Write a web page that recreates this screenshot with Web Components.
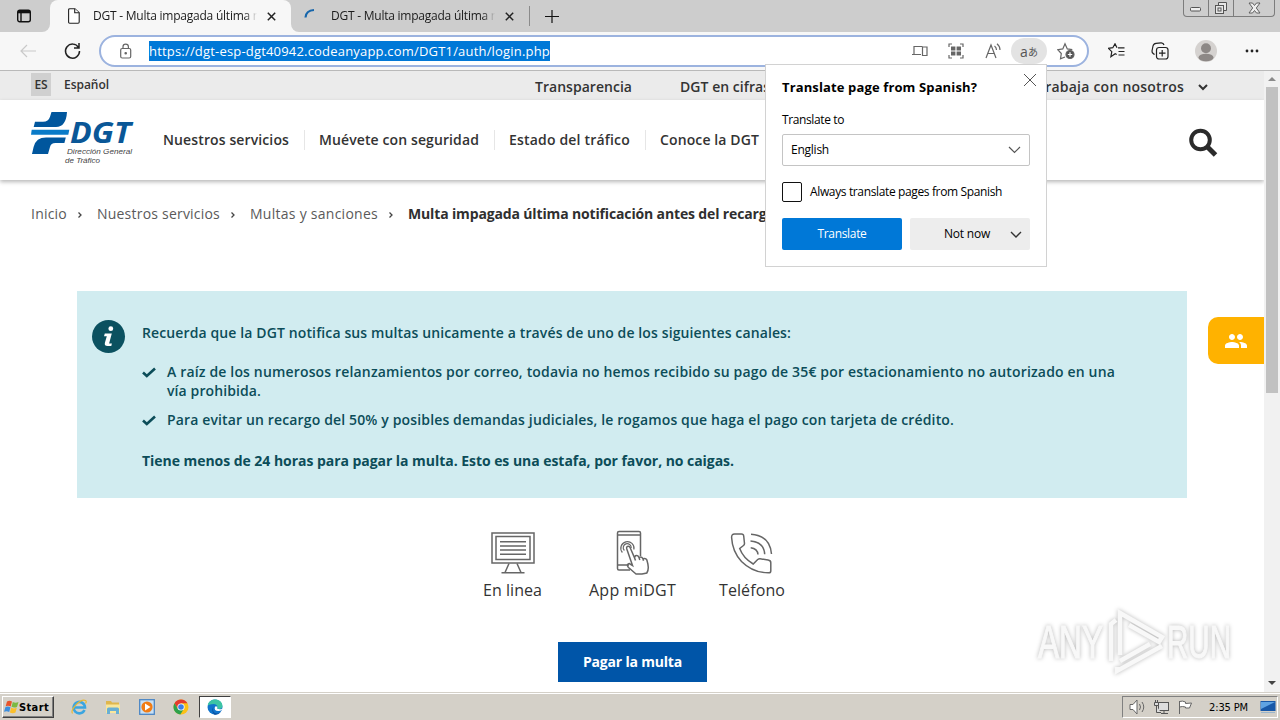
<!DOCTYPE html>
<html lang="es">
<head>
<meta charset="utf-8">
<title>DGT - Multa impagada última notificación</title>
<style>
    html, body { margin: 0; height: 100%; overflow: hidden; }
    body { font-family: "Open Sans", "Noto Sans", sans-serif; color: #333; background: #fff; }
</style>
</head>
<body>
<desktop-screen></desktop-screen>

<script>
// Text that is spaced out (or in) to fill the width given in px
class FitLabel extends HTMLElement {
    connectedCallback() {
        if (!this.shadowRoot) {
            this.attachShadow({ mode: 'open' });
            this.shadowRoot.innerHTML = `
                <style>
                    :host { display: inline-block; white-space: nowrap; flex: none; justify-self: start; }
                </style>
                <slot></slot>
            `;
        }
        const wanted = parseFloat(this.getAttribute('w'));
        if (!wanted) return;
        this.style.letterSpacing = '0px';
        const natural = this.getBoundingClientRect().width;
        this.style.letterSpacing = `${(wanted - natural) / this.textContent.length}px`;
        this.style.width = `${wanted}px`;
    }
}
customElements.define('fit-label', FitLabel);

class BrowserTab extends HTMLElement {
    connectedCallback() {
        this.attachShadow({ mode: 'open' });
        this.shadowRoot.innerHTML = `
            <style>
                :host {
                    display: flex;
                    align-items: center;
                    box-sizing: border-box;
                    height: 32px;
                    flex: none;
                    color: #1b1b1b;
                    font-size: 12px;
                }
                :host([active]) { background: #f7f7f7; border-radius: 8px 8px 0 0; }
                .title {
                    overflow: hidden;
                    width: 164px;
                    line-height: 20px;
                    -webkit-mask: linear-gradient(90deg, #000 152px, transparent 164px);
                    mask: linear-gradient(90deg, #000 152px, transparent 164px);
                }
                .close { margin-left: 10px; }
            </style>
            <slot name="icon"></slot>
            <div class="title"><slot></slot></div>
            <svg class="close" width="9" height="9" viewBox="0 0 9 9" stroke="#222" stroke-width="1.5"><path d="M.8.8l7.4 7.4M8.2.8L.8 8.2"/></svg>
        `;
    }
}
customElements.define('browser-tab', BrowserTab);

class TabStrip extends HTMLElement {
    connectedCallback() {
        this.attachShadow({ mode: 'open' });
        this.shadowRoot.innerHTML = `
            <style>
                :host {
                    display: flex;
                    height: 32px;
                    background: #cdcdcd;
                }
                .menu-wrap { background: #f7f7f7; }
                .menu {
                    display: flex;
                    align-items: center;
                    box-sizing: border-box;
                    width: 50px;
                    height: 32px;
                    padding-left: 17px;
                    background: #cdcdcd;
                    border-radius: 0 0 8px 0;
                }
                .active-wrap { background: #cdcdcd; }
                .active-wrap browser-tab { width: 241px; padding-left: 18px; }
                .active-wrap svg { margin-right: 13px; }
                .second { background: #f7f7f7; }
                .second browser-tab { width: 238px; padding-left: 12px; background: #cdcdcd; border-radius: 0 0 0 8px; }
                .second svg { margin-right: 14px; }
                .after { display: flex; align-items: center; flex: 1; }
                .bar { width: 1px; height: 20px; background: #8b8b8b; }
                .plus { margin-left: 15px; }
                .win {
                    align-self: flex-start;
                    margin: 0 5px 0 auto;
                    display: flex;
                    height: 16px;
                    border: 1px solid #7c7c7c;
                    border-top: 0;
                    border-radius: 0 0 4px 4px;
                }
                .win span { display: flex; align-items: center; justify-content: center; }
                .win span + span { border-left: 1px solid #7c7c7c; }
            </style>
            <div class="menu-wrap"><div class="menu">
                <svg width="14" height="14" viewBox="0 0 14 14" fill="none" stroke="#111" stroke-width="1.4"><rect x=".7" y="1.2" width="12.6" height="11.6" rx="2"/><path d="M1 3h12" stroke-width="2.6"/><path d="M4 3v9.4"/></svg>
            </div></div>
            <div class="active-wrap"><browser-tab active>
                <svg slot="icon" width="12" height="16" viewBox="0 0 12 16" fill="#fff" stroke="#222" stroke-width="1.1"><path d="M1.9.7h5l4.300 4v9.400q0 1.100-1.100 1.100H1.7q-1.100 0-1.100-1.100V1.800q0-1.100 1.300-1.100z"/><path d="M6.700.8v4h4.400"/></svg>
                <fit-label w="167">DGT - Multa impagada última n</fit-label>
            </browser-tab></div>
            <div class="second"><browser-tab>
                <svg slot="icon" width="14" height="16" viewBox="0 0 14 16" fill="none" stroke="#1766ab" stroke-width="2.200"><path d="M2.500 9.500Q3 2.500 11 2"/></svg>
                <fit-label w="167">DGT - Multa impagada última n</fit-label>
            </browser-tab></div>
            <div class="after">
                <div class="bar"></div>
                <svg class="plus" width="14" height="13" viewBox="0 0 14 13" stroke="#111" stroke-width="1.2"><path d="M7 0v13M0 6.5h14"/></svg>
                <div class="win">
                    <span style="width:24px"><svg width="14" height="12" fill="#eee" stroke="#555"><rect x="1.5" y="5.5" width="10" height="3.5" rx="1"/></svg></span>
                    <span style="width:24px"><svg width="14" height="14" fill="#e6e6e6" stroke="#555"><path d="M4.500 1.500h8v8h-3v-5h-5z"/><rect x="1.500" y="4.500" width="8" height="8"/><rect x="4" y="7" width="3" height="3"/></svg></span>
                    <span style="width:40px"><svg width="13" height="12" viewBox="0 0 13 12" fill="#eee" stroke="#555" stroke-width=".9"><path d="M1 1h3.500l2 2.500L8.500 1H12L8.300 6l3.700 5H8.500l-2-2.500L4.500 11H1l3.700-5z"/></svg></span>
                </div>
            </div>
        `;
    }
}
customElements.define('tab-strip', TabStrip);

class BrowserToolbar extends HTMLElement {
    connectedCallback() {
        this.attachShadow({ mode: 'open' });
        this.shadowRoot.innerHTML = `
            <style>
                :host {
                    display: flex;
                    align-items: center;
                    height: 39px;
                    box-sizing: border-box;
                    border-bottom: 1px solid #b9b9b9;
                    background: #f7f7f7;
                    padding-left: 19px;
                }
                svg { flex: none; fill: none; stroke: #222; stroke-width: 1.2; }
                .reload { margin-left: 26px; }
                .address {
                    display: flex;
                    align-items: center;
                    box-sizing: border-box;
                    width: 990px;
                    height: 32px;
                    margin-left: 17px;
                    border: 2px solid #9cb3df;
                    border-radius: 16px;
                    background: #fff;
                    padding-left: 19px;
                }
                .address svg { stroke: #666; }
                .url {
                    margin-left: 17px;
                    height: 20px;
                    line-height: 20px;
                    background: #0078d7;
                    color: #fff;
                    font-size: 13px;
                }
                .tools { display: flex; align-items: center; margin-left: auto; }
                .pill {
                    width: 36px;
                    height: 26px;
                    border-radius: 13px;
                    background: #e3e3e3;
                    display: flex;
                    align-items: center;
                    justify-content: center;
                    font: 14px "Open Sans", "Noto Sans CJK JP", sans-serif;
                    color: #555;
                }
                .pill small { font-size: 10px; }
            </style>
            <svg width="18" height="14" viewBox="0 0 18 14" style="stroke:#c9c9c9"><path d="M17 7H2M8 1L2 7l6 6"/></svg>
            <svg class="reload" width="19" height="18" viewBox="0 0 19 18" style="stroke-width:1.5"><path d="M15.500 5.500A7 7 0 1 0 16.500 9M16 1v5h-5"/></svg>
            <div class="address">
                <svg width="12" height="16" viewBox="0 0 12 16"><rect x=".7" y="5.500" width="10" height="9.500" rx="1.500"/><path d="M3 5.500V3.800a2.700 2.700 0 0 1 5.400 0v1.700"/><circle cx="5.700" cy="10.200" r=".7" fill="#555"/></svg>
                <div class="url"><fit-label w="401">https://dgt-esp-dgt40942.codeanyapp.com/DGT1/auth/login.php</fit-label></div>
                <div class="tools">
                    <svg width="16" height="12" viewBox="0 0 16 12"><path d="M9 9.500H0M2 9.500v-8h8.500M15 2h-4.500v8.500H15z"/></svg>
                    <svg width="16" height="16" viewBox="0 0 16 16" style="margin-left:20px"><path d="M1 4V1h3M12 1h3v3M15 12v3h-3M4 15H1v-3"/><path d="M3 5.500h4.400M8.600 5.500H13M3 10.500h4.400M8.600 10.500H13" stroke-width="4"/></svg>
                    <svg width="17" height="16" viewBox="0 0 17 16" style="margin-left:21px"><path d="M1 15L6 2l5 13M2.700 10.500h6.600M9.500 3q2 1.500 2 4M12 .8q3 2.500 3 6.200"/></svg>
                    <div class="pill" style="margin-left:9px">a<small>あ</small></div>
                    <svg width="19" height="18" viewBox="0 0 19 18" style="margin:0 11px 0 10px"><path d="M8 15l-4.500 1.800.8-5.300L.8 7.700l5-.8L8 1.800l2.300 5.100 5 .8"/><circle cx="13" cy="12.500" r="4" fill="#555"/><path d="M13 10.300v4.400M10.800 12.500h4.400" stroke="#fff"/></svg>
                </div>
            </div>
            <svg width="17" height="16" viewBox="0 0 17 16" style="margin-left:19px"><path d="M10 4.800h6.500M10.500 8.500h6M10.500 12h6M8.700 11.500l-1.500-.8-4.300 3 .9-5L.5 5.300l4.300-.6L7 .8l2 4"/></svg>
            <svg width="18" height="18" viewBox="0 0 18 18" style="margin-left:26px"><path d="M3.600 12.500l-1-.6Q.8 11 1 9L2 4q.5-2.500 3-2.700l5-.4Q12.500.8 13 3"/><rect x="5.500" y="5.500" width="11.500" height="11.500" rx="2.500"/><path d="M11.200 8v6.500M8 11.200h6.500"/></svg>
            <svg width="22" height="22" viewBox="0 0 22 22" style="margin-left:26px;stroke:none"><circle cx="11" cy="11" r="11" fill="#d5d2d0"/><circle cx="11" cy="8.300" r="5" fill="#8d8886"/><ellipse cx="11" cy="17.500" rx="7.500" ry="3.800" fill="#8d8886"/></svg>
            <svg width="14" height="4" viewBox="0 0 14 4" style="margin-left:28px;fill:#222;stroke:none"><circle cx="2" cy="2" r="1.400"/><circle cx="7" cy="2" r="1.400"/><circle cx="12" cy="2" r="1.400"/></svg>
        `;
    }
}
customElements.define('browser-toolbar', BrowserToolbar);

class DgtLogo extends HTMLElement {
    connectedCallback() {
        this.attachShadow({ mode: 'open' });
        this.shadowRoot.innerHTML = `
            <style>
                :host { display: block; width: 103px; height: 54px; }
                svg { display: block; overflow: visible; font-family: "Liberation Sans", sans-serif; font-style: italic; }
                .name { font-family: "Open Sans", sans-serif; }
            </style>
            <svg width="103" height="54" viewBox="0 0 103 54">
                <path fill="#00569d" d="M20.500 0H36q-1 15-11 15H2.700L4 9.800h8q5.500 0 7-5z"/>
                <path fill="#0a7bc8" d="M.7 17.700h37.600l-1 5H0z"/>
                <path fill="#00569d" d="M34.800 25.600l-1.400 5.400h-9q-4.500 0-5.400 4l-2 7H1l1.600-7Q5 25.600 15 25.600z"/>
                <text class="name" x="39" y="31" font-size="28" font-weight="bold" fill="#0a5797" textLength="61" lengthAdjust="spacingAndGlyphs">DGT</text>
                <text x="36" y="41.500" font-size="8" fill="#444" textLength="65" lengthAdjust="spacingAndGlyphs">Dirección General</text>
                <text x="34" y="50.700" font-size="8" fill="#444" textLength="35" lengthAdjust="spacingAndGlyphs">de Tráfico</text>
            </svg>
        `;
    }
}
customElements.define('dgt-logo', DgtLogo);

class DgtHeader extends HTMLElement {
    connectedCallback() {
        this.attachShadow({ mode: 'open' });
        this.shadowRoot.innerHTML = `
            <style>
                :host { display: block; }
                .top {
                    display: flex;
                    align-items: flex-start;
                    height: 29px;
                    background: #ebebeb;
                    padding-left: 31px;
                    font-size: 12px;
                    font-weight: 600;
                }
                .lang {
                    width: 20px;
                    height: 23px;
                    margin-top: 2px;
                    line-height: 23px;
                    background: #d0d0d0;
                    text-align: center;
                }
                .es { margin-left: 13px; line-height: 27px; }
                .links { display: flex; margin-left: 426px; font-size: 14px; line-height: 31px; }
                .main {
                    display: flex;
                    height: 80px;
                    box-sizing: border-box;
                    padding-left: 31px;
                    background: #fff;
                    box-shadow: 0 2px 4px rgba(0, 0, 0, .28);
                }
                dgt-logo { margin-top: 12px; flex: none; }
                nav { display: flex; margin: 30px 0 0 14px; height: 20px; font-size: 14px; font-weight: 600; line-height: 20px; }
                nav fit-label { margin: 0 15px; }
                nav i { width: 1px; margin-right: -1px; background: #e6e6e6; }
                .search { margin: 28px 46px 0 auto; }
            </style>
            <div class="top">
                <span class="lang"><fit-label w="13">ES</fit-label></span>
                <fit-label class="es" w="45">Español</fit-label>
                <div class="links">
                    <fit-label w="97">Transparencia</fit-label>
                    <fit-label w="90" style="margin-left:48px">DGT en cifras</fit-label>
                    <fit-label w="147" style="margin-left:267px">Trabaja con nosotros</fit-label>
                    <svg width="10" height="7" viewBox="0 0 10 7" fill="none" stroke="#333" stroke-width="2" style="margin:13px 0 0 14px"><path d="M1 1l4 4 4-4"/></svg>
                </div>
            </div>
            <div class="main">
                <dgt-logo></dgt-logo>
                <nav>
                    <fit-label w="126">Nuestros servicios</fit-label><i></i>
                    <fit-label w="160">Muévete con seguridad</fit-label><i></i>
                    <fit-label w="121">Estado del tráfico</fit-label><i></i>
                    <fit-label w="99">Conoce la DGT</fit-label>
                </nav>
                <svg class="search" width="30" height="31" viewBox="0 0 30 31" fill="none" stroke="#2b2b2b"><circle cx="12.500" cy="12" r="9.300" stroke-width="4"/><path d="M19.500 19l8 8" stroke-width="5"/></svg>
            </div>
        `;
    }
}
customElements.define('dgt-header', DgtHeader);

class BreadCrumb extends HTMLElement {
    connectedCallback() {
        this.attachShadow({ mode: 'open' });
        this.shadowRoot.innerHTML = `
            <style>
                :host {
                    display: flex;
                    align-items: center;
                    height: 20px;
                    margin: 23px 0 0 31px;
                    font-size: 14px;
                    color: #5a5a5a;
                }
                svg { margin: 3px 15px 0 11px; flex: none; }
                strong { color: #2f2f2f; }
            </style>
            <fit-label w="36">Inicio</fit-label>
            ${BreadCrumb.arrow}
            <fit-label w="123">Nuestros servicios</fit-label>
            ${BreadCrumb.arrow}
            <fit-label w="128">Multas y sanciones</fit-label>
            ${BreadCrumb.arrow}
            <strong><fit-label w="367">Multa impagada última notificación antes del recargo</fit-label></strong>
        `;
    }
}
BreadCrumb.arrow = '<svg width="4" height="6" viewBox="0 0 4 6" fill="none" stroke="#444" stroke-width="1.300"><path d="M.5.500L3 3 .5 5.500"/></svg>';
customElements.define('bread-crumb', BreadCrumb);

class InfoNotice extends HTMLElement {
    connectedCallback() {
        this.attachShadow({ mode: 'open' });
        this.shadowRoot.innerHTML = `
            <style>
                :host {
                    display: flex;
                    box-sizing: border-box;
                    width: 1110px;
                    height: 207px;
                    margin: 68px 0 0 77px;
                    padding: 28px 0 0 15px;
                    background: #d1ecf0;
                    color: #0c4d59;
                    font-size: 14px;
                    font-weight: 600;
                    line-height: 19px;
                }
                .badge { flex: none; margin: 1px 16px 0 0; }
                p, ul { margin: 0; padding: 0; }
                p { height: 19px; margin-top: 4px; }
                ul { list-style: none; margin-top: 20px; }
                li { display: flex; align-items: flex-start; margin-bottom: 10px; }
                li svg { margin: 5px 11px 0 0; }
                li div { display: flex; flex-direction: column; align-items: flex-start; }
                .last { margin-top: 22px; font-weight: 700; }
            </style>
            <svg class="badge" width="34" height="34" viewBox="0 0 34 34"><circle cx="16.500" cy="16.500" r="16.500" fill="#0b5160"/><g fill="#fff"><circle cx="18.800" cy="8.700" r="2.400"/><path d="M12.800 13.500h7l-2.700 10h2.800l-.6 2.500h-3.700q-3.500 0-2.700-3.200l1.900-6.600h-2.800z"/></g></svg>
            <div>
                <p><fit-label w="649">Recuerda que la DGT notifica sus multas unicamente a través de uno de los siguientes canales:</fit-label></p>
                <ul>
                    <li>${InfoNotice.check}<div>
                        <fit-label w="948">A raíz de los numerosos relanzamientos por correo, todavia no hemos recibido su pago de 35€ por estacionamiento no autorizado en una</fit-label>
                        <fit-label w="94">vía prohibida.</fit-label>
                    </div></li>
                    <li>${InfoNotice.check}<div>
                        <fit-label w="787">Para evitar un recargo del 50% y posibles demandas judiciales, le rogamos que haga el pago con tarjeta de crédito.</fit-label>
                    </div></li>
                </ul>
                <p class="last"><fit-label w="592">Tiene menos de 24 horas para pagar la multa. Esto es una estafa, por favor, no caigas.</fit-label></p>
            </div>
        `;
    }
}
InfoNotice.check = '<svg width="14" height="11" viewBox="0 0 14 11" fill="none" stroke="#0c4d59" stroke-width="2.600"><path d="M1 5.500L4.800 9 13 1.500"/></svg>';
customElements.define('info-notice', InfoNotice);

class PayChannel extends HTMLElement {
    connectedCallback() {
        this.attachShadow({ mode: 'open' });
        this.shadowRoot.innerHTML = `
            <style>
                :host {
                    display: flex;
                    flex-direction: column;
                    align-items: center;
                    font-size: 16px;
                    line-height: 22px;
                    color: #333;
                }
                ::slotted(svg) { height: 46px; fill: none; stroke: #666; stroke-width: 1.5; margin-bottom: 3px; }
            </style>
            <slot name="icon"></slot>
            <slot></slot>
        `;
    }
}
customElements.define('pay-channel', PayChannel);

class PayOptions extends HTMLElement {
    connectedCallback() {
        this.attachShadow({ mode: 'open' });
        this.shadowRoot.innerHTML = `
            <style>
                :host { display: block; padding-top: 32px; }
                .channels { display: flex; margin-left: 483px; }
                .channels pay-channel + pay-channel { margin-left: 47px; }
                .channels pay-channel:last-child { margin-left: 43px; }
                button {
                    display: block;
                    width: 149px;
                    height: 40px;
                    margin: 41px 0 0 558px;
                    padding: 0 0 2px;
                    border: 0;
                    background: #0055a8;
                    color: #fff;
                    font: 700 14px "Open Sans", sans-serif;
                }
            </style>
            <div class="channels">
                <pay-channel>
                    <svg slot="icon" width="44" viewBox="0 0 44 46"><rect x="1" y="3" width="42" height="30"/><rect x="5" y="6.500" width="34" height="23"/><path d="M9 11.700h26M9 15.900h26M9 20.100h26M9 24.300h26M18 33.500l-4 9M26 33.500l4 9M10.500 42.700h23"/></svg>
                    <fit-label w="59">En linea</fit-label>
                </pay-channel>
                <pay-channel>
                    <svg slot="icon" width="34" viewBox="0 0 34 46"><path d="M14 40H3q-1.500 0-1.500-1.500V3Q1.500 1.500 3 1.500h20q1.500 0 1.500 1.500v23M1.500 5h23M1.500 35H13"/><path d="M6.400 22.500a6.600 6.600 0 1 1 11.500-3M8.400 20.500a4 4 0 1 1 6.800-2.500" stroke-width="1.200"/><path d="M20 44l-7.500-6.500q-2.500-3 .8-4l3.200 2L10.800 19q-.7-2.500 1.200-2.800 1.500-.2 2.200 1.500l4.300 10 1-2q2.400-.7 3.500 1.800 2.500-1.300 4 1.300 2.800-1 3.800 1 1.500 5 1.500 7.700 0 3-1.500 5.500L26 44zM18.500 27.700l1 2.800M23 27.500l.8 2.500M27 28.800l.5 2"/></svg>
                    <fit-label w="87">App miDGT</fit-label>
                </pay-channel>
                <pay-channel>
                    <svg slot="icon" width="44" viewBox="0 0 44 46"><path d="M4.500 4h7q2 0 2.200 2l.8 7.500q0 1.200-1 2l-3.800 3q3.500 9.500 13.500 15.500l4.500-4.500q1-.8 2.400-.7l8 1.200q2.700.4 2.700 2.700V41q0 1.800-2 1.800Q23 43 11.500 31.500 2.300 21.500 1.600 7.500 1.500 4 4.500 4zM21 4.200Q40 5.500 41.500 24M20.500 11Q34 12 34.700 24.300M20.700 17.700Q27.500 18.500 28 24.500"/></svg>
                    <fit-label w="66">Teléfono</fit-label>
                </pay-channel>
            </div>
            <button><fit-label w="99">Pagar la multa</fit-label></button>
        `;
    }
}
customElements.define('pay-options', PayOptions);

class PageScrollbar extends HTMLElement {
    connectedCallback() {
        this.attachShadow({ mode: 'open' });
        this.shadowRoot.innerHTML = `
            <style>
                :host {
                    display: flex;
                    flex-direction: column;
                    align-items: center;
                    width: 16px;
                    background: #f1f1f1;
                }
                i { width: 12px; height: 306px; margin-top: 6px; background: #c1c1c1; }
                .up { margin-top: 6px; }
                .down { margin-top: auto; margin-bottom: 7px; }
            </style>
            <svg class="up" width="8" height="4"><path d="M0 4l4-4 4 4z" fill="#8a8a8a"/></svg>
            <i></i>
            <svg class="down" width="8" height="4"><path d="M0 0l4 4 4-4z" fill="#444"/></svg>
        `;
    }
}
customElements.define('page-scrollbar', PageScrollbar);

class TranslatePopup extends HTMLElement {
    connectedCallback() {
        this.attachShadow({ mode: 'open' });
        this.shadowRoot.innerHTML = `
            <style>
                :host {
                    display: block;
                    box-sizing: border-box;
                    width: 282px;
                    height: 203px;
                    padding: 13px 16px 0;
                    border: 1px solid #d2d2d2;
                    background: #fff;
                    color: #000;
                    font-size: 12px;
                    line-height: 18px;
                }
                .head { display: flex; height: 23px; font-size: 13px; font-weight: 700; }
                .head svg { margin: -5px -7px 0 auto; }
                .to { margin-top: 10px; height: 18px; }
                .select {
                    display: flex;
                    align-items: center;
                    justify-content: space-between;
                    box-sizing: border-box;
                    height: 32px;
                    margin-top: 5px;
                    padding: 0 8px;
                    border: 1px solid #c4c4c4;
                    border-radius: 2px;
                }
                .always { display: flex; align-items: center; gap: 8px; margin-top: 16px; }
                .box { box-sizing: border-box; width: 20px; height: 20px; border: 1px solid #111; border-radius: 2px; }
                .buttons { display: grid; grid-template-columns: 120px 120px; gap: 8px; margin-top: 16px; }
                .buttons div { display: flex; align-items: center; justify-content: center; height: 32px; background: #ededed; border-radius: 2px; }
                .buttons .go { background: #0078d7; color: #fff; }
                .buttons .no { justify-content: flex-end; box-sizing: border-box; padding-right: 8px; gap: 20px; }
            </style>
            <div class="head">
                <fit-label w="195">Translate page from Spanish?</fit-label>
                <svg width="14" height="14" viewBox="0 0 14 14" stroke="#555"><path d="M1 1l12 12M13 1L1 13"/></svg>
            </div>
            <div class="to"><fit-label w="62">Translate to</fit-label></div>
            <div class="select">
                <fit-label w="38">English</fit-label>
                <svg width="13" height="8" viewBox="0 0 13 8" fill="none" stroke="#555" stroke-width="1.200"><path d="M1 1l5.500 5.500L12 1"/></svg>
            </div>
            <div class="always"><span class="box"></span><fit-label w="192">Always translate pages from Spanish</fit-label></div>
            <div class="buttons">
                <div class="go"><fit-label w="49">Translate</fit-label></div>
                <div class="no"><fit-label w="46">Not now</fit-label>
                    <svg width="12" height="7" viewBox="0 0 12 7" fill="none" stroke="#333" stroke-width="1.400"><path d="M1 1l5 5 5-5"/></svg>
                </div>
            </div>
        `;
    }
}
customElements.define('translate-popup', TranslatePopup);

class AnyrunMark extends HTMLElement {
    connectedCallback() {
        this.attachShadow({ mode: 'open' });
        this.shadowRoot.innerHTML = `
            <style>
                :host { display: block; }
                svg { display: block; overflow: visible; filter: drop-shadow(0 0 2px rgba(0, 0, 0, .28)); font: 46px "Liberation Sans", sans-serif; }
            </style>
            <svg width="212" height="72" viewBox="0 0 212 72" fill="#f8f8f8" stroke="#f8f8f8">
                <text x="5" y="53" textLength="65" lengthAdjust="spacingAndGlyphs">ANY</text>
                <text x="134" y="53" textLength="64" lengthAdjust="spacingAndGlyphs">RUN</text>
                <g fill="none" stroke-width="4.500"><path d="M78 56V19l5-4M87 50V8l42 24-3 5-30-17"/><path d="M87 56l30-17M84 62v4l45-25"/></g>
            </svg>
        `;
    }
}
customElements.define('anyrun-mark', AnyrunMark);

class TaskBar extends HTMLElement {
    connectedCallback() {
        this.attachShadow({ mode: 'open' });
        this.shadowRoot.innerHTML = `
            <style>
                :host {
                    display: flex;
                    align-items: flex-start;
                    box-sizing: border-box;
                    height: 28px;
                    border-top: 1px solid #d4d0c8;
                    background: #d4d0c8;
                    box-shadow: inset 0 1px #fff;
                    padding: 3px 2px 0;
                    color: #000;
                }
                .start {
                    display: flex;
                    align-items: center;
                    box-sizing: border-box;
                    width: 52px;
                    height: 22px;
                    border: 1px solid;
                    border-color: #fff #404040 #404040 #fff;
                    box-shadow: inset -1px -1px #808080;
                    font: bold 11px "DejaVu Sans Condensed", "DejaVu Sans", sans-serif;
                    padding-left: 1px;
                }
                .apps { display: flex; align-items: center; height: 22px; margin-left: 17px; }
                .apps svg { margin-right: 18px; }
                .edge {
                    display: flex;
                    justify-content: center;
                    align-items: center;
                    box-sizing: border-box;
                    width: 32px;
                    height: 22px;
                    margin-left: -8px;
                    background: #fff;
                    border: 1px solid;
                    border-color: #404040 #fff #fff #404040;
                }
                .apps .edge svg { margin: 0; }
                .tray {
                    display: flex;
                    align-items: center;
                    box-sizing: border-box;
                    width: 156px;
                    height: 22px;
                    margin-left: auto;
                    padding-left: 6px;
                    border: 1px solid;
                    border-color: #808080 #fff #fff #808080;
                    font: 11px "DejaVu Sans Condensed", "DejaVu Sans", sans-serif;
                }
                .tray svg { flex: none; }
            </style>
            <div class="start">
                <svg width="15" height="16" viewBox="0 0 15 16"><path fill="#e8542b" d="M3 2.500Q5.500 1 8 2.600L6.700 7.500Q4.200 6 1.700 7.200z"/><path fill="#7bb943" d="M8.800 3Q11.500 4.500 14.500 3L13 8q-3 1.200-5.500-.2z"/><path fill="#3c8ede" d="M1.500 8Q4 6.800 6.500 8.300L5.200 13Q2.700 11.500 0 12.800z"/><path fill="#fbbf2c" d="M7.200 8.600q2.500 1.600 5.600.2l-1.300 4.800q-3 1.200-5.600-.2z"/></svg>
                <fit-label w="30">Start</fit-label>
            </div>
            <div class="apps">
                <svg width="16" height="16" viewBox="0 0 16 16" fill="none"><path d="M13.500 11A5.700 5.700 0 1 1 14 8.500H3" stroke="#3ba5e0" stroke-width="2.600"/><path d="M1.500 14.500C-1 11 9-.5 14.500 1.500q1.500 1 0 3" stroke="#e9b832" stroke-width="1.200"/></svg>
                <svg width="16" height="16" viewBox="0 0 16 16"><path fill="#dfb64d" d="M1 2h5l1 1.500h7V14H1z"/><path fill="#f9e69b" d="M1 5.500h14V14H1z"/><path fill="#69afd4" d="M2 15V10q0-1.500 1.500-1.500h9Q14 8.500 14 10v5h-3v-3H5v3z"/></svg>
                <svg width="16" height="16" viewBox="0 0 16 16"><rect x=".7" y=".7" width="14.600" height="14.600" fill="#c8e0f5" stroke="#4b86c5" stroke-width="1.300"/><circle cx="8" cy="8" r="5.600" fill="#f17c14"/><path fill="#fff" d="M6 4.500L11.500 8 6 11.500z"/></svg>
                <svg width="16" height="16" viewBox="0 0 16 16"><circle cx="8" cy="8" r="7.500" fill="#fbc116"/><path fill="#e33b2e" d="M1.500 4.200A7.500 7.500 0 0 1 14.500 4.300H8L4.800 9.800z"/><path fill="#2da14c" d="M1.500 4.200A7.500 7.500 0 0 0 7.300 15.500L11 9.800 4.800 9.800z"/><circle cx="8" cy="8" r="3.600" fill="#fff"/><circle cx="8" cy="8" r="2.800" fill="#3b7fe8"/></svg>
                <div class="edge">
                    <svg width="16" height="16" viewBox="0 0 16 16"><circle cx="8" cy="8" r="7.500" fill="#1074cc"/><path fill="#3cc4a4" d="M.7 6.500C2-1.500 15-1.500 15.500 7c0 3-3.500 3.500-5.500 2.500 1.300-2-.2-4.500-3.500-4.500Q2.500 5 .7 6.500z"/><path fill="#fff" d="M8 7.500q-1.500 4.500 3.500 4.500 2 0 3.200-1L16 8.500 15 9.800q-2.500 1.200-5-.3.600-1 .2-2z"/><path fill="#0b509f" d="M6.300 8q-1.500 6.500 4.200 6.500 2.500-.3 3.700-2Q11.500 16.500 7 15.400 4 12 6.300 8z"/></svg>
                </div>
            </div>
            <div class="tray">
                <svg width="17" height="16" viewBox="0 0 17 16" fill="#fff" stroke="#666"><path d="M1 5.500h3l4-4.500v14l-4-4.500H1z"/><path fill="none" d="M10.500 5q2 3 0 6M13 3q3.500 5 0 10"/></svg>
                <svg width="17" height="16" viewBox="0 0 17 16" fill="#ddd" stroke="#555" style="margin-left:7px"><rect x="5.500" y="3.500" width="10" height="8"/><path d="M8 14.500h7M11 12v2M1.500 3.500h4v3h-4zM2.500 1v2M4.500 1v2M3.500 7v6.500H8"/></svg>
                <svg width="17" height="15" viewBox="0 0 17 15" fill="#fff" stroke="#666" style="margin-left:7px"><path d="M2.500 14V1M2.500 1.500q3-1 6 .5v1.500l6-.5-2 5H8.500V7q-3-1-6 0z"/></svg>
                <fit-label w="39" style="margin-left:15px">2:35 PM</fit-label>
                <svg width="16" height="14" viewBox="0 0 16 14" style="margin-left:12px"><rect x=".5" y="1" width="15" height="10" fill="#1858a8"/><path d="M1 2h14L1 9z" fill="#5fa3e3"/><path d="M1 12.500h14" stroke="#9ab5cc"/></svg>
            </div>
        `;
    }
}
customElements.define('task-bar', TaskBar);

class DesktopScreen extends HTMLElement {
    connectedCallback() {
        this.attachShadow({ mode: 'open' });
        this.shadowRoot.innerHTML = `
            <style>
                :host {
                    display: flex;
                    flex-direction: column;
                    position: relative;
                    width: 1280px;
                    height: 720px;
                    overflow: hidden;
                }
                .view { display: flex; flex: 1; min-height: 0; }
                .page { flex: 1; overflow: hidden; background: #fff; }
                translate-popup { position: absolute; left: 765px; top: 64px; }
                .contact {
                    position: absolute;
                    left: 1208px;
                    top: 317px;
                    display: flex;
                    align-items: center;
                    justify-content: center;
                    width: 56px;
                    height: 47px;
                    border-radius: 10px 0 0 10px;
                    background: #ffb200;
                }
                anyrun-mark { position: absolute; left: 1033px; top: 605px; }
            </style>
            <tab-strip></tab-strip>
            <browser-toolbar></browser-toolbar>
            <div class="view">
                <div class="page">
                    <dgt-header></dgt-header>
                    <bread-crumb></bread-crumb>
                    <info-notice></info-notice>
                    <pay-options></pay-options>
                </div>
                <page-scrollbar></page-scrollbar>
            </div>
            <task-bar></task-bar>
            <div class="contact">
                <svg width="24" height="24" viewBox="0 0 24 24" fill="#fff"><path d="M16 11c1.660 0 2.990-1.340 2.990-3S17.660 5 16 5s-3 1.340-3 3 1.340 3 3 3zm-8 0c1.660 0 2.990-1.340 2.990-3S9.660 5 8 5 5 6.340 5 8s1.340 3 3 3zm0 2c-2.330 0-7 1.170-7 3.500V19h14v-2.500C15 14.170 10.330 13 8 13zm8 0c-.29 0-.62.020-.97.050 1.160.840 1.970 1.970 1.970 3.450V19h6v-2.500c0-2.330-4.670-3.500-7-3.500z"/></svg>
            </div>
            <translate-popup></translate-popup>
            <anyrun-mark></anyrun-mark>
        `;
    }
}
customElements.define('desktop-screen', DesktopScreen);
</script>
</body>
</html>
